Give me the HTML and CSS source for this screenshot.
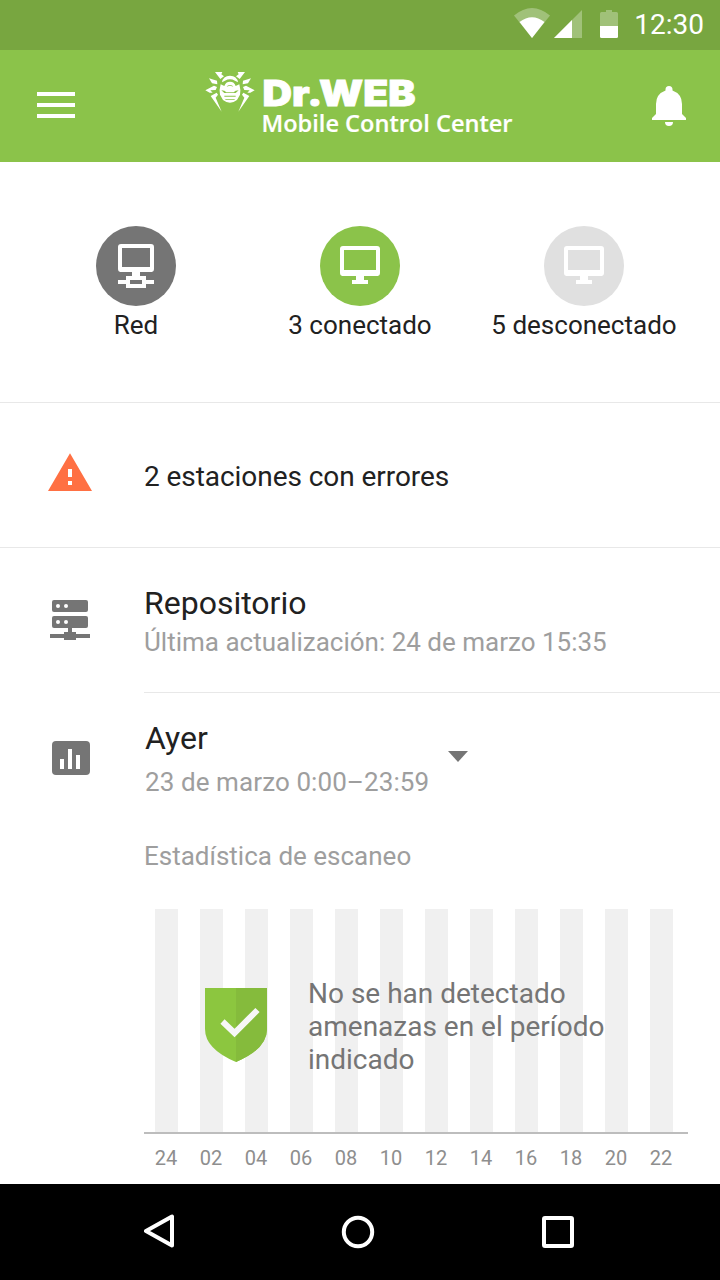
FILE: index.html
```html
<!DOCTYPE html>
<html lang="es">
<head>
  <meta charset="UTF-8" />
  <meta name="viewport" content="width=device-width, initial-scale=1.0" />
  <title>Dr.Web Mobile Control Center</title>
  <link rel="stylesheet" href="styles.css">
</head>
<body>

  <div class="statusbar">
    <svg class="signals" width="106" height="32" viewBox="0 0 106 32">
      <path class="dim" d="M0 7.5Q18-7.5 36 7.5L18 30Z"/>
      <path d="M5.5 14Q18 4.500 30.500 14L18 30Z"/>
      <path class="dim" d="M40 30L68 2V30Z"/>
      <path d="M40 30L58 12V30Z"/>
      <path class="dim" d="M86 18V5.500Q86 4 87.500 4H92V2H98V4H102.500Q104 4 104 5.500V18Z"/>
      <path d="M86 18H104V28.500Q104 30 102.500 30H87.500Q86 30 86 28.500Z"/>
    </svg>
    <span class="clock">12:30</span>
  </div>

  <header class="toolbar">
    <svg class="menu" width="38" height="26" viewBox="0 0 38 26">
      <path d="M0 0H38V4H0ZM0 11H38V15H0ZM0 22H38V26H0Z"/>
    </svg>
    <svg class="logo" width="320" height="82" viewBox="0 0 320 82">
      <g transform="translate(-10 0) scale(.33333)">
        <g id="legs">
          <path d="M60 36H82L79 43L87 49L76 57Z"/>
          <path d="M42 55L66 62L67 73L51 70Z"/>
          <path d="M31 91L57 77L66 81L62 90L46 91L53 98L44 98Z"/>
          <path d="M47 108L65 98L69 104L62 113L80 155Z"/>
        </g>
        <use href="#legs" transform="translate(210 0) scale(-1 1)"/>
        <path d="M81 67Q84 47 105 47Q126 47 129 67L120 62Q105 54 90 62Z"/>
        <path d="M77 73L88 78Q92 65 105 65Q118 65 122 78L133 73Q138 90 135 104L126 120Q116 128 105 128Q94 128 84 120L75 104Q72 90 77 73Z"/>
        <path class="cut" d="M95 81Q97 75 105 75Q113 75 115 81L111 79Q105 76 99 79ZM79 91Q90 91 94 97H116Q120 91 131 91L122 99H88ZM88 107H122V110H88ZM91 117H119V119H91Z"/>
      </g>
      <text class="brand" x="57.500" y="46" textLength="153" lengthAdjust="spacingAndGlyphs" dx="0 0 0 -3">Dr.WEB</text>
      <text class="product" x="56.500" y="71.500" textLength="251" lengthAdjust="spacingAndGlyphs">Mobile Control Center</text>
    </svg>
    <svg class="bell" width="34" height="40" viewBox="0 0 34 40">
      <path d="M17 0A3.500 3.500 0 0 0 13.500 3.500V4.500Q4 8 4 18V28L0 32V34H34V32L30 28V18Q30 8 20.500 4.500V3.500A3.500 3.500 0 0 0 17 0ZM13 36A4 4 0 0 0 21 36Z"/>
    </svg>
  </header>

  <section class="summary">
    <div class="stat">
      <svg class="badge network" width="80" height="80" viewBox="0 0 80 80">
        <rect x="24" y="20" width="32" height="24" rx="1"/>
        <path class="solid" d="M24 41H56V46H24ZM36 46H44V50H50V54H58V58H50V62H30V58H22V54H30V50H36ZM34 54V58H46V54Z"/>
      </svg>
      <span>Red</span>
    </div>
    <div class="stat">
      <svg class="badge online" width="80" height="80" viewBox="0 0 80 80">
        <rect x="22" y="22" width="36" height="26" rx="1"/>
        <path class="solid" d="M22 44H58V50H44V54H48V58H32V54H36V50H22Z"/>
      </svg>
      <span>3 conectado</span>
    </div>
    <div class="stat">
      <svg class="badge offline" width="80" height="80" viewBox="0 0 80 80">
        <rect x="22" y="22" width="36" height="26" rx="1"/>
        <path class="solid" d="M22 44H58V50H44V54H48V58H32V54H36V50H22Z"/>
      </svg>
      <span>5 desconectado</span>
    </div>
  </section>

  <section class="row alert">
    <svg class="icon warning" width="48" height="48" viewBox="0 0 48 48">
      <path fill-rule="evenodd" d="M24 2.200L46 40H2ZM22 18V26H26V18ZM22 30V34H26V30Z"/>
    </svg>
    <p>2 estaciones con errores</p>
  </section>

  <section class="row repo">
    <svg class="icon" width="48" height="48" viewBox="0 0 48 48">
      <rect x="6" y="4" width="36" height="12" rx="2"/>
      <rect x="6" y="20" width="36" height="12" rx="2"/>
      <path d="M22 32H26V36H30V38H44V42H30V44H18V42H4V38H18V36H22Z"/>
      <g class="dots">
        <circle cx="12" cy="10" r="2"/>
        <circle cx="20" cy="10" r="2"/>
        <circle cx="12" cy="26" r="2"/>
        <circle cx="20" cy="26" r="2"/>
      </g>
    </svg>
    <div class="repo-text">
      <h2>Repositorio</h2>
      <p class="muted">Última actualización: 24 de marzo 15:35</p>
    </div>
  </section>

  <section class="row period">
    <svg class="icon" width="48" height="48" viewBox="0 0 48 48">
      <rect x="6" y="7" width="38" height="34" rx="4"/>
      <path class="dots" d="M14 25H18V35H14ZM22 15H26V35H22ZM30 21H34V35H30Z"/>
    </svg>
    <div class="period-body">
      <div class="picker">
        <div>
          <h2>Ayer</h2>
          <p class="muted">23 de marzo 0:00–23:59</p>
        </div>
        <svg class="arrow" width="20" height="11" viewBox="0 0 20 11">
          <path d="M0 0H20L10 11Z"/>
        </svg>
      </div>

      <p class="muted caption">Estadística de escaneo</p>

      <div class="chart">
        <div class="bars">
          <i></i><i></i><i></i><i></i><i></i><i></i>
          <i></i><i></i><i></i><i></i><i></i><i></i>
        </div>
        <div class="axis">
          <span>24</span><span>02</span><span>04</span><span>06</span>
          <span>08</span><span>10</span><span>12</span><span>14</span>
          <span>16</span><span>18</span><span>20</span><span>22</span>
        </div>
        <div class="message">
          <svg width="62" height="75" viewBox="0 0 62 75">
            <path fill="#8cc63f" d="M0 0H62V41Q62 61 31 74Q0 61 0 41Z"/>
            <path fill="#85bb3c" d="M31 0H62V41Q62 61 31 74Z"/>
            <path fill="none" stroke="#f7f7f7" stroke-width="6" d="M17.500 33.500L29.500 45L52.500 22"/>
          </svg>
          <p>No se han detectado<br>amenazas en el período<br>indicado</p>
        </div>
      </div>
    </div>
  </section>

  <nav class="navbar">
    <svg width="32" height="36" viewBox="0 0 32 36">
      <path d="M28 2.500V31.500L2 17Z"/>
    </svg>
    <svg width="36" height="36" viewBox="0 0 36 36">
      <circle cx="18" cy="18" r="14.200"/>
    </svg>
    <svg width="36" height="36" viewBox="0 0 36 36">
      <rect x="4" y="4" width="28" height="28" rx="1"/>
    </svg>
  </nav>

</body>
</html>
```
FILE: styles.css
```css
* {
  box-sizing: border-box;
}

body {
  margin: 0;
  width: 720px;
  height: 1280px;
  overflow: hidden;
  display: flex;
  flex-direction: column;
  background: #fff;
  color: #212121;
  font-family: Roboto, sans-serif;
}

h2, p {
  margin: 0;
  font-weight: 400;
}

h2 {
  font-size: 32px;
  line-height: 38px;
}

svg {
  display: block;
  flex-shrink: 0;
}

.statusbar {
  height: 50px;
  padding: 8px 16px 0 0;
  display: flex;
  justify-content: flex-end;
  background: #78a640;
  color: #fff;
}

.signals {
  fill: #fff;
  margin-right: 14px;
}

.signals .dim {
  opacity: 0.3;
}

.clock {
  font-size: 28px;
  line-height: 33px;
}

.toolbar {
  height: 112px;
  display: flex;
  align-items: flex-start;
  background: #8bc34a;
  fill: #fff;
}

.menu {
  margin: 42px 0 0 37px;
}

.logo {
  margin: 10px 0 0 130px;
}

.logo .cut {
  fill: #8bc34a;
}

.brand {
  font: 900 35px Inter, sans-serif;
  stroke: #fff;
  stroke-width: 0.8px;
}

.product {
  font: 600 23px "Open Sans", sans-serif;
  stroke: #fff;
  stroke-width: 0.2px;
}

.bell {
  margin: 36px 34px 0 auto;
}

.summary {
  height: 241px;
  padding: 64px 24px 0;
  display: grid;
  grid-template-columns: repeat(3, 224px);
  border-bottom: 1px solid #e8e8e8;
}

.stat {
  display: flex;
  flex-direction: column;
  align-items: center;
  gap: 4px;
  font-size: 26px;
  line-height: 30px;
  white-space: nowrap;
}

.badge {
  border-radius: 50%;
  fill: none;
  stroke: #fff;
  stroke-width: 4;
}

.badge .solid {
  fill: #fff;
  fill-rule: evenodd;
  stroke: none;
}

.network { background: #757575; }
.online { background: #8bc34a; }
.offline { background: #e0e0e0; }

.row {
  display: grid;
  grid-template-columns: 144px 1fr;
}

.icon {
  margin-left: 46px;
  fill: #757575;
}

.icon.warning {
  fill: #ff7043;
}

.icon .dots {
  fill: #fff;
}

.muted {
  color: #9e9e9e;
  font-size: 26px;
  line-height: 30px;
}

.alert {
  height: 145px;
  align-items: center;
  border-bottom: 1px solid #e8e8e8;
  font-size: 28px;
  line-height: 32px;
  letter-spacing: -0.06px;
}

.alert p {
  padding-top: 4px;
}

.repo {
  height: 145px;
}

.repo .icon {
  margin-top: 48px;
}

.repo-text {
  padding-top: 36px;
  border-bottom: 1px solid #e8e8e8;
}

.repo-text .muted {
  margin-top: 5px;
}

.period {
  height: 491px;
}

.period .icon {
  margin-top: 41px;
}

.period-body {
  padding-top: 26px;
}

.picker {
  width: 324px;
  padding-left: 1px;
  display: flex;
  justify-content: space-between;
}

.picker .muted {
  margin-top: 10px;
  letter-spacing: 0.09px;
}

.arrow {
  margin-top: 32px;
  fill: #757575;
}

.caption {
  margin-top: 44px;
}

.chart {
  position: relative;
  width: 544px;
  margin-top: 38px;
}

.bars {
  height: 225px;
  display: grid;
  grid-template-columns: repeat(12, 45px);
  border-bottom: 2px solid #bdbdbd;
}

.bars i {
  width: 23px;
  margin-left: 11px;
  background: #f0f0f0;
}

.axis {
  margin-top: 12px;
  display: grid;
  grid-template-columns: repeat(12, 45px);
  color: #8e8e8e;
  font-size: 20px;
  line-height: 24px;
  text-align: center;
}

.axis span {
  padding-right: 1px;
}

/* sits on top of the empty bars */
.message {
  position: absolute;
  left: 61px;
  top: 68px;
  display: flex;
  gap: 41px;
  color: #757575;
  font-size: 28px;
  line-height: 33px;
  white-space: nowrap;
}

.message svg {
  margin-top: 11px;
}

.navbar {
  height: 96px;
  padding: 30px 144px 0;
  display: flex;
  justify-content: space-between;
  background: #000;
  fill: none;
  stroke: #fff;
  stroke-width: 4;
  stroke-linejoin: round;
}
```
